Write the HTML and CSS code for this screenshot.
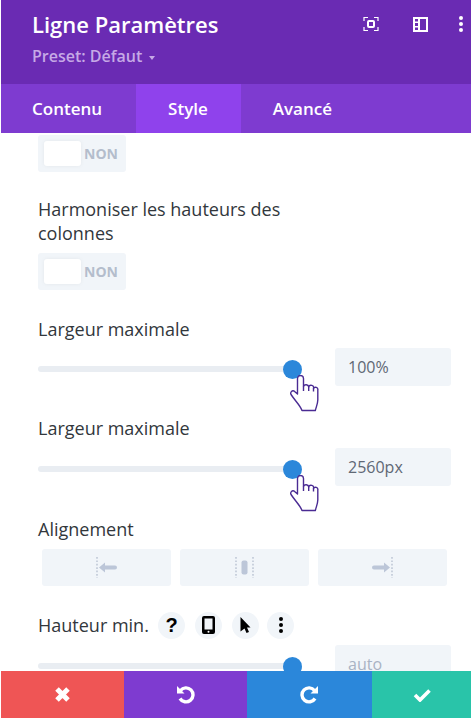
FILE: index.html
```html
<!DOCTYPE html>
<html lang="fr">
<head>
    <meta charset="UTF-8">
    <meta name="viewport" content="width=device-width, initial-scale=1.0">
    <title>Ligne Paramètres</title>
    <link rel="stylesheet" href="styles.css">
</head>
<body>
    <div class="panel">
        <div class="panel-header">
            <div class="header-text">
                <h1>Ligne Paramètres</h1>
                <div class="preset">Preset: Défaut <span class="caret"></span></div>
            </div>
            <div class="header-icons">
                <svg width="16" height="16" viewBox="0 0 16 16" fill="none" stroke="#fff">
                    <path d="M1 5V1.500H5M11 1.500H15V5M15 11V14.500H11M5 14.500H1V11" stroke-width="1.200"/>
                    <rect x="5" y="5" width="6" height="6" rx="1" stroke-width="2"/>
                </svg>
                <svg width="15" height="15" viewBox="0 0 15 15">
                    <path fill="#fff" fill-rule="evenodd" d="M0 0H15V15H0ZM7 2V13H13V2ZM2 2V4.500H5V2ZM2 6V9H5V6ZM2 10.500V13H5V10.500Z"/>
                </svg>
                <svg class="header-dots" width="4" height="16" viewBox="0 0 4 16" fill="#fff">
                    <circle cx="2" cy="2" r="2"/>
                    <circle cx="2" cy="8" r="2"/>
                    <circle cx="2" cy="14" r="2"/>
                </svg>
            </div>
        </div>

        <div class="tabs">
            <a class="tab tab-first">Contenu</a>
            <a class="tab tab-active">Style</a>
            <a class="tab">Avancé</a>
        </div>

        <div class="panel-content">
            <div class="toggle"><span class="knob"></span><span class="toggle-text">NON</span></div>

            <label class="field-label label-wrap">Harmoniser les hauteurs des colonnes</label>
            <div class="toggle"><span class="knob"></span><span class="toggle-text">NON</span></div>

            <label class="field-label label-gap label-first">Largeur maximale</label>
            <div class="slider-row">
                <div class="track">
                    <span class="thumb"></span>
                    <svg class="hand" width="29" height="37" viewBox="0 0 29 37" fill="#fff" stroke="#4a2b93" stroke-width="1.400" stroke-linejoin="round">
                        <path d="M7.500 19V3.500a3 3 0 0 1 6 0V11.500a2.700 2.700 0 0 1 5.200.5a2.500 2.500 0 0 1 4.800 1.500a2.300 2.300 0 0 1 4.300 1.500V25c0 3-1 5-2.500 10.500H12C10 30 6 27 1 19.500c-1-2 1-4.500 3-3.500l3.500 3Z"/>
                        <path d="M13.500 11.500V16M18.700 12V16M23.500 13.500V16.500" fill="none"/>
                    </svg>
                </div>
                <div class="value-box">100%</div>
            </div>

            <label class="field-label label-gap">Largeur maximale</label>
            <div class="slider-row">
                <div class="track">
                    <span class="thumb"></span>
                    <svg class="hand" width="29" height="37" viewBox="0 0 29 37" fill="#fff" stroke="#4a2b93" stroke-width="1.400" stroke-linejoin="round">
                        <path d="M7.500 19V3.500a3 3 0 0 1 6 0V11.500a2.700 2.700 0 0 1 5.200.5a2.500 2.500 0 0 1 4.800 1.500a2.300 2.300 0 0 1 4.300 1.500V25c0 3-1 5-2.500 10.500H12C10 30 6 27 1 19.500c-1-2 1-4.500 3-3.500l3.500 3Z"/>
                        <path d="M13.500 11.500V16M18.700 12V16M23.500 13.500V16.500" fill="none"/>
                    </svg>
                </div>
                <div class="value-box">2560px</div>
            </div>

            <label class="field-label label-gap label-align">Alignement</label>
            <div class="align-row">
                <div class="align-btn">
                    <svg width="21" height="21" viewBox="0 0 21 21">
                        <path d="M1 0V21" stroke="#c3cbd9" stroke-width="1.700" stroke-dasharray="1.700 1.700"/>
                        <path d="M3 10.500L9 5.500V8.500H19a2 2 0 0 1 0 4H9V15.500Z" fill="#bcc6d8"/>
                    </svg>
                </div>
                <div class="align-btn">
                    <svg width="19" height="21" viewBox="0 0 19 21">
                        <path d="M1 0V21M18 0V21" stroke="#c3cbd9" stroke-width="1.700" stroke-dasharray="1.700 1.700"/>
                        <rect x="6.500" y="3.500" width="6" height="14" rx="2" fill="#bcc6d8"/>
                    </svg>
                </div>
                <div class="align-btn">
                    <svg width="21" height="21" viewBox="0 0 21 21">
                        <path d="M20 0V21" stroke="#c3cbd9" stroke-width="1.700" stroke-dasharray="1.700 1.700"/>
                        <path d="M18 10.500L12 5.500V8.500H2a2 2 0 0 0 0 4H12V15.500Z" fill="#bcc6d8"/>
                    </svg>
                </div>
            </div>

            <div class="label-row">
                <label class="field-label">Hauteur min.</label>
                <span class="round-btn round-help">?</span>
                <span class="round-btn">
                    <svg width="13" height="18" viewBox="0 0 13 18">
                        <path fill="#000" fill-rule="evenodd" d="M2 0H11a2 2 0 0 1 2 2V16a2 2 0 0 1-2 2H2a2 2 0 0 1-2-2V2a2 2 0 0 1 2-2ZM2.500 2.500V13.500H10.500V2.500Z"/>
                        <circle cx="6.500" cy="15.700" r="1" fill="#fff"/>
                    </svg>
                </span>
                <span class="round-btn">
                    <svg width="11" height="17" viewBox="0 0 11 17">
                        <path fill="#000" d="M0.500 0L10.500 10.500H7L9 15L6.500 16L4.500 11.500L0.500 14.500Z"/>
                    </svg>
                </span>
                <span class="round-btn round-last">
                    <svg width="4" height="16" viewBox="0 0 4 16" fill="#000">
                        <circle cx="2" cy="2" r="2"/>
                        <circle cx="2" cy="8" r="2"/>
                        <circle cx="2" cy="14" r="2"/>
                    </svg>
                </span>
            </div>
            <div class="slider-row slider-last">
                <div class="track"><span class="thumb"></span></div>
                <div class="value-box value-muted">auto</div>
            </div>
        </div>

        <div class="panel-footer">
            <a class="foot-btn foot-red">
                <svg width="17" height="17" viewBox="0 0 17 17">
                    <path d="M3 3L14 14M14 3L3 14" stroke="#fff" stroke-width="5"/>
                </svg>
            </a>
            <a class="foot-btn foot-purple">
                <svg width="19" height="19" viewBox="0 0 19 19" fill="none">
                    <path d="M4.500 5.500A7 7 0 1 1 4 13.500" stroke="#fff" stroke-width="3.400"/>
                    <path d="M1 1V8.500H8.500Z" fill="#fff"/>
                </svg>
            </a>
            <a class="foot-btn foot-blue">
                <svg width="19" height="19" viewBox="0 0 19 19" fill="none">
                    <path d="M14.500 5.500A7 7 0 1 0 15 13.500" stroke="#fff" stroke-width="3.400"/>
                    <path d="M18 1V8.500H10.500Z" fill="#fff"/>
                </svg>
            </a>
            <a class="foot-btn foot-green">
                <svg width="18" height="14" viewBox="0 0 18 14" fill="none">
                    <path d="M2 7L7 12L16.500 2.500" stroke="#fff" stroke-width="3.600"/>
                </svg>
            </a>
        </div>
    </div>
</body>
</html>
```

FILE: styles.css
```css
* {
    box-sizing: border-box;
}

body {
    margin: 0;
    font-family: "Open Sans", sans-serif;
    background-color: #fff;
    height: 718px;
    overflow: hidden;
}

.panel {
    display: flex;
    flex-direction: column;
    height: 718px;
    padding-left: 1px;
}

.panel-header {
    height: 84px;
    background-color: #6a2bb3;
    color: #fff;
    display: flex;
    justify-content: space-between;
    padding: 7px 8px 0 31px;
}

.panel-header h1 {
    margin: 0;
    font-size: 22px;
    line-height: 34px;
    font-weight: 600;
}

.preset {
    margin-top: 5px;
    font-size: 16px;
    line-height: 21px;
    font-weight: 600;
    color: #c6a9e6;
}

.caret {
    display: inline-block;
    margin-left: 2px;
    vertical-align: 2px;
    border-top: 4px solid #c6a9e6;
    border-left: 3px solid transparent;
    border-right: 3px solid transparent;
}

.header-icons {
    display: flex;
    align-items: center;
    gap: 34px;
    height: 34px;
}

.header-dots {
    margin-left: -3px;
}

.tabs {
    height: 49px;
    background-color: #7e3bd0;
    display: flex;
}

.tab {
    color: #fff;
    font-size: 17px;
    font-weight: 600;
    line-height: 49px;
    padding: 0 33px 0 32px;
}

.tab-first {
    padding-left: 31px;
    padding-right: 34px;
}

.tab-active {
    background-color: #8f42ec;
}

.panel-content {
    flex: 1;
    min-height: 0;
    overflow: hidden;
    padding: 2px 20px 0 37px;
}

.toggle {
    width: 88px;
    height: 37px;
    background-color: #f1f5f9;
    border-radius: 3px;
    display: flex;
    align-items: center;
    padding-left: 6px;
}

.knob {
    width: 37px;
    height: 25px;
    background-color: #fff;
    border-radius: 3px;
    box-shadow: 0 0 4px rgba(0, 0, 0, 0.06);
}

.toggle-text {
    margin-left: 3px;
    font-size: 14px;
    font-weight: 700;
    color: #b4bdcc;
}

.field-label {
    display: block;
    font-size: 18px;
    line-height: 24px;
    color: #32373c;
}

.label-wrap {
    width: 270px;
    margin: 25px 0 8px;
}

.label-gap {
    margin: 30px 0 8px;
}

.label-first {
    margin: 27px 0 7px;
}

.label-align {
    margin-top: 31px;
}

.slider-row {
    display: flex;
    align-items: flex-start;
    width: 413px;
}

.track {
    position: relative;
    width: 255px;
    height: 6px;
    margin-top: 18px;
    background-color: #e9edf2;
    border-radius: 3px;
}

.thumb {
    position: absolute;
    top: -6px;
    right: -9px;
    width: 19px;
    height: 19px;
    border-radius: 50%;
    background-color: #2b87da;
}

.hand {
    position: absolute;
    top: 9px;
    left: 252px;
}

.value-box {
    width: 116px;
    height: 38px;
    margin-left: 42px;
    padding-left: 13px;
    background-color: #f1f5f9;
    border-radius: 3px;
    font-size: 16px;
    line-height: 38px;
    color: #5f6875;
}

.value-muted {
    color: #a9b3c4;
}

.align-row {
    display: flex;
    gap: 9px;
    padding-left: 4px;
}

.align-btn {
    width: 129px;
    height: 37px;
    background-color: #f1f5f9;
    border-radius: 3px;
    display: flex;
    align-items: center;
    justify-content: center;
}

.label-row {
    display: flex;
    align-items: center;
    margin-top: 27px;
    height: 24px;
}

.label-row .field-label {
    width: 120px;
}

.round-btn {
    width: 27px;
    height: 27px;
    margin-left: 10px;
    flex: none;
    border-radius: 50%;
    background-color: #f1f5f9;
    display: flex;
    align-items: center;
    justify-content: center;
}

.round-help {
    margin-left: 0;
    font-family: "Liberation Sans", sans-serif;
    font-size: 20px;
    font-weight: 700;
    color: #000;
}

.round-last {
    margin-left: 8px;
}

.slider-last {
    margin-top: 8px;
}

.panel-footer {
    height: 47px;
    display: flex;
}

.foot-btn {
    display: flex;
    align-items: center;
    justify-content: center;
}

.foot-red {
    width: 123px;
    background-color: #ef5555;
}

.foot-purple {
    width: 123px;
    background-color: #7e3bd0;
}

.foot-blue {
    width: 125px;
    background-color: #2b87da;
}

.foot-green {
    width: 99px;
    background-color: #29c4a9;
}
```
